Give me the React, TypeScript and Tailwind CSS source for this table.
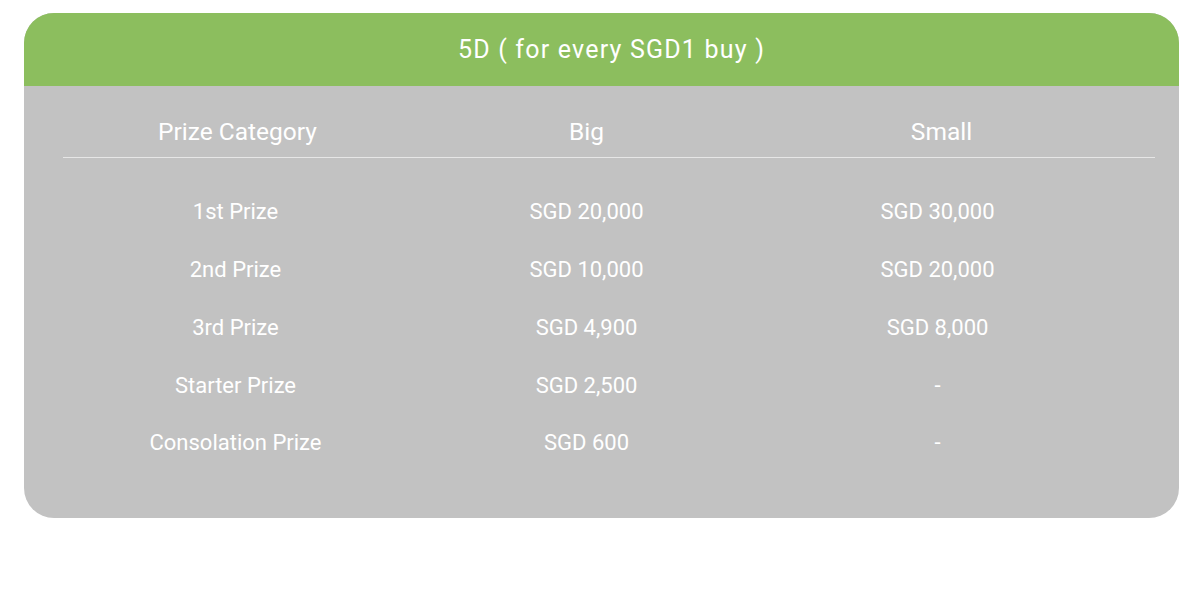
import React from "react";

const rows = [
  { name: "1st Prize", big: "SGD 20,000", small: "SGD 30,000" },
  { name: "2nd Prize", big: "SGD 10,000", small: "SGD 20,000" },
  { name: "3rd Prize", big: "SGD 4,900", small: "SGD 8,000" },
  { name: "Starter Prize", big: "SGD 2,500", small: "-" },
  { name: "Consolation Prize", big: "SGD 600", small: "-" },
];

const App = () => {
  return (
    <div className="w-[1200px] h-[600px] bg-white pt-[13px] pl-[24px] font-['Roboto',sans-serif]">
      <div className="w-[1155px] h-[505px] rounded-[30px] overflow-hidden bg-[#c2c2c2] text-white">
        <div className="h-[73px] bg-[#8cbe5e] flex items-center justify-center text-[25px] tracking-[1.2px] pl-[20px]">
          5D ( for every SGD1 buy )
        </div>
        <div className="grid grid-cols-3 w-[1053px] ml-[36px] h-[71px] items-end pb-[6px] text-[24.5px] text-center">
          <div className="pl-[4px]">Prize Category</div>
          <div>Big</div>
          <div className="pl-[8px]">Small</div>
        </div>
        <div className="h-px bg-[#e6e6e6] ml-[39px] mr-[24px]" />
        <div className="w-[1053px] ml-[36px] pt-[25px] text-[22px] text-center">
          {rows.map((r) => (
            <div key={r.name} className="grid grid-cols-3 h-[57.75px] items-center">
              <div>{r.name}</div>
              <div>{r.big}</div>
              <div>{r.small}</div>
            </div>
          ))}
        </div>
      </div>
    </div>
  );
};

export default App;
